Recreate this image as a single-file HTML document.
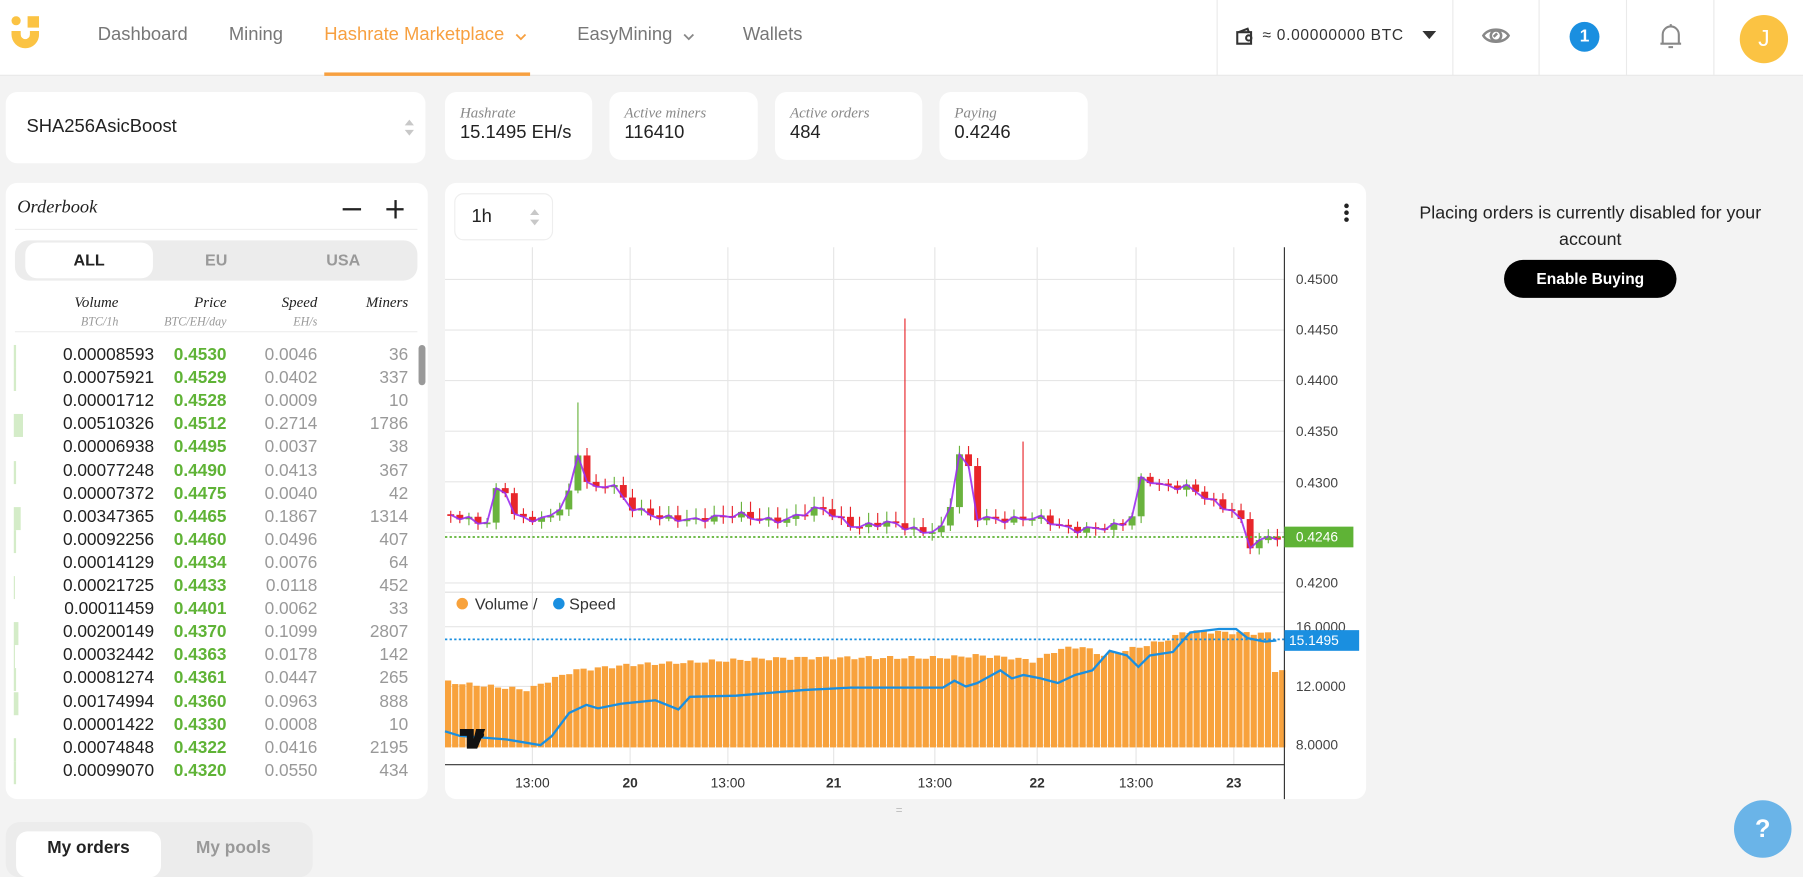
<!DOCTYPE html>
<html><head><meta charset="utf-8">
<style>
*{box-sizing:border-box;margin:0;padding:0}
html,body{width:1803px;height:877px;overflow:hidden;background:#f3f3f3}
#w{position:absolute;left:0;top:0;width:1568px;height:763px;transform:scale(1.14987);transform-origin:0 0;font-family:"Liberation Sans",sans-serif;color:#222}
.a{position:absolute}
.card{position:absolute;background:#fff;border-radius:10px}
.nav{position:absolute;top:22px;font-size:16px;color:#777}
.vd{position:absolute;top:0;width:1px;height:66px;background:#eaeaea}
.lbl{font-family:"Liberation Serif",serif;font-style:italic;font-size:13px;color:#888}
.val{font-size:16px;color:#222}
.ser{font-family:"Liberation Serif",serif;font-style:italic}
.r{position:absolute;font-size:15px;text-align:right;white-space:nowrap}
</style></head><body><div id="w">
<div class="a" style="left:0;top:0;width:1568px;height:66px;background:#fff;border-bottom:1px solid #e8e8e8"></div>
<svg class="a" style="left:10px;top:14px" width="24" height="32" viewBox="0 0 24 32"><circle cx="4" cy="4" r="4" fill="#fbc343"/><rect x="14" y="0" width="10" height="10" fill="#fbc343"/><path d="M0 13H8V16a4 4 0 0 0 8 0V13H24V16a12 12 0 0 1-24 0Z" fill="#fbc343"/></svg>
<div class="nav" style="left:85px">Dashboard</div>
<div class="nav" style="left:199px">Mining</div>
<div class="nav" style="left:282px;color:#f7a040">Hashrate Marketplace</div>
<svg class="a" style="left:448px;top:29px" width="10" height="7"><path d="M1 1l4 4 4-4" stroke="#f7a040" stroke-width="1.6" fill="none"/></svg>
<div class="a" style="left:282px;top:63px;width:179px;height:3px;background:#f7a040"></div>
<div class="nav" style="left:502px">EasyMining</div>
<svg class="a" style="left:594px;top:29px" width="10" height="7"><path d="M1 1l4 4 4-4" stroke="#888" stroke-width="1.6" fill="none"/></svg>
<div class="nav" style="left:646px">Wallets</div>
<div class="vd" style="left:1058px"></div><div class="vd" style="left:1263px"></div><div class="vd" style="left:1338px"></div><div class="vd" style="left:1414px"></div><div class="vd" style="left:1490px"></div>
<svg class="a" style="left:1074px;top:22px" width="18" height="18" viewBox="0 0 18 18" fill="none" stroke="#333" stroke-width="1.8"><path d="M2 6h12v10H2z"/><path d="M3 6l8-3 1 3"/><circle cx="12" cy="11" r="2.3"/></svg>
<div class="a" style="left:1098px;top:23px;font-size:13.5px;letter-spacing:0.6px;color:#333">≈ 0.00000000 BTC</div>
<svg class="a" style="left:1237px;top:27px" width="12" height="8"><path d="M0 0h12L6 7z" fill="#333"/></svg>
<svg class="a" style="left:1288px;top:20px" width="26" height="22" viewBox="0 0 26 22" fill="none" stroke="#888" stroke-width="2.2"><path d="M2 11C6 4 20 4 24 11C20 18 6 18 2 11Z"/><circle cx="13" cy="11" r="4.5"/><path d="M11 12l3-3"/></svg>
<div class="a" style="left:1365px;top:19px;width:26px;height:26px;border-radius:50%;background:#1a8fe0;color:#fff;font-weight:bold;font-size:15px;text-align:center;line-height:26px">1</div>
<svg class="a" style="left:1442px;top:20px" width="22" height="24" viewBox="0 0 22 24" fill="none" stroke="#888" stroke-width="1.8"><path d="M4 18V10a7 7 0 0 1 14 0v8zM2 18h18M9 21h4M11 1v2"/></svg>
<div class="a" style="left:1513px;top:13px;width:42px;height:42px;border-radius:50%;background:#fbc343;color:#fff;font-size:20px;text-align:center;line-height:42px">J</div>

<div class="card" style="left:5px;top:80px;width:365px;height:62px"><div class="a val" style="left:18px;top:22px">SHA256AsicBoost</div>
<svg class="a" style="left:346px;top:23px" width="10" height="16"><path d="M1 6l4-5 4 5zM1 10l4 5 4-5z" fill="#c8c8c8"/></svg></div>
<div class="card" style="left:387px;top:80px;width:128px;height:59px"><div class="a lbl" style="left:13px;top:10px">Hashrate</div><div class="a val" style="left:13px;top:27px">15.1495 EH/s</div></div>
<div class="card" style="left:530px;top:80px;width:129px;height:59px"><div class="a lbl" style="left:13px;top:10px">Active miners</div><div class="a val" style="left:13px;top:27px">116410</div></div>
<div class="card" style="left:674px;top:80px;width:128px;height:59px"><div class="a lbl" style="left:13px;top:10px">Active orders</div><div class="a val" style="left:13px;top:27px">484</div></div>
<div class="card" style="left:817px;top:80px;width:129px;height:59px"><div class="a lbl" style="left:13px;top:10px">Paying</div><div class="a val" style="left:13px;top:27px">0.4246</div></div>

<div class="card" style="left:5px;top:159px;width:367px;height:536px"></div>
<div class="a ser" style="left:15px;top:172px;font-size:16px">Orderbook</div>
<div class="a" style="left:298px;top:181px;width:16px;height:2px;background:#222"></div>
<div class="a" style="left:336px;top:181px;width:15px;height:2px;background:#222"></div>
<div class="a" style="left:342.5px;top:174px;width:2px;height:16px;background:#222"></div>
<div class="a" style="left:13px;top:199px;width:350px;height:1px;background:#eee"></div>
<div class="a" style="left:13px;top:209px;width:350px;height:35px;border-radius:12px;background:#ececec"></div>
<div class="a" style="left:22px;top:211px;width:111px;height:31px;border-radius:10px;background:#fff"></div>
<div class="a" style="left:22px;top:218px;width:111px;text-align:center;font-weight:bold;font-size:14px">ALL</div>
<div class="a" style="left:133px;top:218px;width:110px;text-align:center;font-weight:bold;font-size:14px;color:#999">EU</div>
<div class="a" style="left:243px;top:218px;width:111px;text-align:center;font-weight:bold;font-size:14px;color:#999">USA</div>
<div class="a ser" style="right:1465px;top:255px;font-size:13px;text-align:right">Volume<br><span style="font-size:10.5px;color:#999">BTC/1h</span></div>
<div class="a ser" style="right:1371px;top:255px;font-size:13px;text-align:right">Price<br><span style="font-size:10.5px;color:#999">BTC/EH/day</span></div>
<div class="a ser" style="right:1292px;top:255px;font-size:13px;text-align:right">Speed<br><span style="font-size:10.5px;color:#999">EH/s</span></div>
<div class="a ser" style="right:1213px;top:255px;font-size:13px;text-align:right">Miners</div>
<div class="a" style="left:13px;top:288px;width:350px;height:1px;background:#eee"></div>
<div class="a" style="left:364px;top:300px;width:6px;height:35px;border-radius:3px;background:#999"></div>
<div id="rows"></div>

<div class="a" style="left:5px;top:715px;width:267px;height:48px;border-radius:12px;background:#ececec"></div>
<div class="a" style="left:14px;top:723px;width:126px;height:40px;border-radius:10px;background:#fff"></div>
<div class="a" style="left:14px;top:729px;width:126px;text-align:center;font-weight:bold;font-size:15px">My orders</div>
<div class="a" style="left:140px;top:729px;width:126px;text-align:center;font-weight:bold;font-size:15px;color:#999">My pools</div>

<div class="card" style="left:387px;top:159px;width:801px;height:536px"></div>
<div class="a" style="left:395px;top:168px;width:86px;height:41px;border:1px solid #eee;border-radius:8px"></div>
<div class="a" style="left:410px;top:180px;font-size:16px">1h</div>
<svg class="a" style="left:460px;top:181px" width="10" height="16"><path d="M1 6l4-5 4 5zM1 10l4 5 4-5z" fill="#c8c8c8"/></svg>
<svg class="a" style="left:1167px;top:176px" width="8" height="18"><circle cx="4" cy="3" r="2" fill="#222"/><circle cx="4" cy="9" r="2" fill="#222"/><circle cx="4" cy="15" r="2" fill="#222"/></svg>
<div class="a" style="left:779px;top:700px;font-size:10px;color:#bbb">=</div>
<svg id="ch" class="a" style="left:0;top:0" width="1568" height="763"></svg>

<div class="a" style="left:1218px;top:174px;width:330px;text-align:center;font-size:15.5px;line-height:23px;color:#222">Placing orders is currently disabled for your account</div>
<div class="a" style="left:1308px;top:226px;width:150px;height:33px;border-radius:17px;background:#000;color:#fff;font-weight:bold;font-size:13.5px;text-align:center;line-height:33px">Enable Buying</div>
<div class="a" style="left:1508px;top:696px;width:50px;height:50px;border-radius:50%;background:#6ab4e8;color:#fff;font-size:22px;font-weight:bold;text-align:center;line-height:50px">?</div>
</div>
<script>
(function(){
var R=[["0.00008593","0.4530","0.0046","36",2],["0.00075921","0.4529","0.0402","337",2],["0.00001712","0.4528","0.0009","10",0],["0.00510326","0.4512","0.2714","1786",8],["0.00006938","0.4495","0.0037","38",0],["0.00077248","0.4490","0.0413","367",2],["0.00007372","0.4475","0.0040","42",0],["0.00347365","0.4465","0.1867","1314",6],["0.00092256","0.4460","0.0496","407",2],["0.00014129","0.4434","0.0076","64",0],["0.00021725","0.4433","0.0118","452",1],["0.00011459","0.4401","0.0062","33",0],["0.00200149","0.4370","0.1099","2807",4],["0.00032442","0.4363","0.0178","142",1],["0.00081274","0.4361","0.0447","265",2],["0.00174994","0.4360","0.0963","888",4],["0.00001422","0.4330","0.0008","10",0],["0.00074848","0.4322","0.0416","2195",2],["0.00099070","0.4320","0.0550","434",2]];
var h="";R.forEach(function(r,i){var t=300+i*20.1;
if(r[4])h+='<div class="a" style="left:12px;top:'+t+'px;width:'+r[4]+'px;height:20px;background:#d4ecc8"></div>';
h+='<div class="r" style="right:1434px;top:'+t+'px">'+r[0]+'</div><div class="r" style="right:1371px;top:'+t+'px;color:#5fb336;font-weight:bold">'+r[1]+'</div><div class="r" style="right:1292px;top:'+t+'px;color:#999">'+r[2]+'</div><div class="r" style="right:1213px;top:'+t+'px;color:#999">'+r[3]+'</div>';});
document.getElementById("rows").innerHTML=h;
function itp(k,x){for(var i=0;i<k.length-1;i++){if(x<=k[i+1][0]){var f=(x-k[i][0])/(k[i+1][0]-k[i][0]);return k[i][1]+f*(k[i+1][1]-k[i][1]);}}return k[k.length-1][1];}
var s="";
function L(x1,y1,x2,y2,c,w,d){s+='<line x1="'+x1+'" y1="'+y1+'" x2="'+x2+'" y2="'+y2+'" stroke="'+c+'" stroke-width="'+(w||1)+'"'+(d?' stroke-dasharray="'+d+'"':'')+'/>';}
function T(x,y,t,o){s+='<text x="'+x+'" y="'+y+'" '+(o||'')+'>'+t+'</text>';}
var gx=[463,548,633,725,813,902,988,1073];
gx.forEach(function(x){L(x,215,x,665,"#e6e6e6")});
[243,287,331,375,419,463,507].forEach(function(y){L(387,y,1117,y,"#e6e6e6")});
[545,597,648].forEach(function(y){L(387,y,1117,y,"#e6e6e6")});
L(387,515,1117,515,"#ddd");
var vk=[[387,593],[460,600],[470,595],[500,583],[550,578],[620,575],[660,573],[700,572],[820,572],[850,570],[880,572],[900,575],[920,565],[940,562],[960,570],[990,563],[1020,555],[1030,549],[1105,551],[1108,583],[1117,583]];
for(var x=387;x<1116;x+=6.2){var y=itp(vk,x+3)+Math.sin(x*1.7)*1.5;s+='<rect x="'+x.toFixed(1)+'" y="'+y.toFixed(1)+'" width="5.4" height="'+(650-y).toFixed(1)+'" fill="#f8a23c"/>';}
var sk=[[387,636],[400,640],[440,643],[470,648],[480,640],[495,620],[510,613],[520,616],[540,612],[570,609],[590,617],[600,606],[640,605],[700,600],[740,598],[820,598],[830,592],[840,597],[850,594],[870,583],[880,590],[890,587],[905,590],[920,594],[935,587],[950,583],[965,566],[980,570],[990,580],[1000,570],[1020,567],[1035,550],[1060,547],[1075,547],[1085,555],[1100,558],[1110,557]];
var p="";sk.forEach(function(k,i){p+=(i?"L":"M")+k[0]+" "+k[1]});
s+='<path d="'+p+'" fill="none" stroke="#1a8fe0" stroke-width="2"/>';
var pk=[[387,0.4268],[420,0.4258],[432,0.4305],[445,0.4265],[470,0.4262],[490,0.4280],[500,0.4330],[510,0.4290],[528,0.4300],[545,0.4275],[570,0.4265],[600,0.4262],[640,0.4268],[660,0.4262],[680,0.4262],[710,0.4275],[740,0.4255],[770,0.4260],[800,0.4250],[820,0.4255],[835,0.4350],[845,0.4265],[870,0.4262],[900,0.4265],[930,0.4252],[960,0.4255],[980,0.4260],[990,0.4305],[1010,0.4295],[1030,0.4295],[1060,0.4275],[1075,0.4270],[1080,0.4235],[1100,0.4245],[1115,0.4246]];
function py(v){return 243+(0.45-v)*8800;}
var prev=py(0.4268),lp="";
for(var i=0;i<92;i++){var cx=389+i*7.9;var c=py(itp(pk,cx))+Math.sin(i*2.3)*2.5;var o=prev;var tp=Math.min(o,c),bt=Math.max(o,c);if(bt-tp<1.5)bt=tp+1.5;
var col=c<o?"#6ab33e":"#e8262b";var hi=tp-3-Math.abs(Math.sin(i*3.1))*6,lo=bt+2+Math.abs(Math.cos(i*1.9))*4;
if(Math.abs(cx-498)<4)hi=350;if(Math.abs(cx-785)<4)hi=277;if(Math.abs(cx-886)<4)hi=384;
L((cx+3).toFixed(1),hi.toFixed(1),(cx+3).toFixed(1),lo.toFixed(1),col);
s+='<rect x="'+cx.toFixed(1)+'" y="'+tp.toFixed(1)+'" width="6" height="'+(bt-tp).toFixed(1)+'" fill="'+col+'"/>';
lp+=(i?"L":"M")+(cx+3).toFixed(1)+" "+c.toFixed(1);prev=c;}
s+='<path d="'+lp+'" fill="none" stroke="#9b2ef0" stroke-width="1.6" opacity="0.9"/>';
L(387,467,1117,467,"#5fb336",1.5,"2 2");L(387,556,1117,556,"#1a8fe0",1.5,"2 2");
L(1117,215,1117,695,"#333");L(387,665,1117,665,"#333");
var ax='font-family="Liberation Sans" font-size="12" fill="#444"';
[[243,"0.4500"],[287,"0.4450"],[331,"0.4400"],[375,"0.4350"],[420,"0.4300"],[507,"0.4200"],[545,"16.0000"],[597,"12.0000"],[648,"8.0000"]].forEach(function(a){T(1127,a[0]+4,a[1],ax)});
s+='<rect x="1117" y="458" width="60" height="18" fill="#5fb336"/>';T(1127,471,"0.4246",'font-family="Liberation Sans" font-size="12" fill="#fff"');
s+='<rect x="1117" y="548" width="65" height="18" fill="#1a8fe0"/>';T(1121,561,"15.1495",'font-family="Liberation Sans" font-size="12" fill="#fff"');
var lb=["13:00","20","13:00","21","13:00","22","13:00","23"];
gx.forEach(function(x,i){T(x,685,lb[i],'font-family="Liberation Sans" font-size="12" fill="#333" text-anchor="middle"'+(i%2?' font-weight="bold"':''))});
s+='<circle cx="402" cy="525" r="5" fill="#f8a23c"/><circle cx="486" cy="525" r="5" fill="#1a8fe0"/>';
T(413,530,"Volume /",'font-family="Liberation Sans" font-size="14" fill="#333"');T(495,530,"Speed",'font-family="Liberation Sans" font-size="14" fill="#333"');
s+='<path d="M400 634h12v17h-6v-11h-6z M414 634h8l-7 17h-5z" fill="#111"/><circle cx="418" cy="639" r="3" fill="#111"/>';
document.getElementById("ch").innerHTML=s;
})();
</script>
</body></html>
